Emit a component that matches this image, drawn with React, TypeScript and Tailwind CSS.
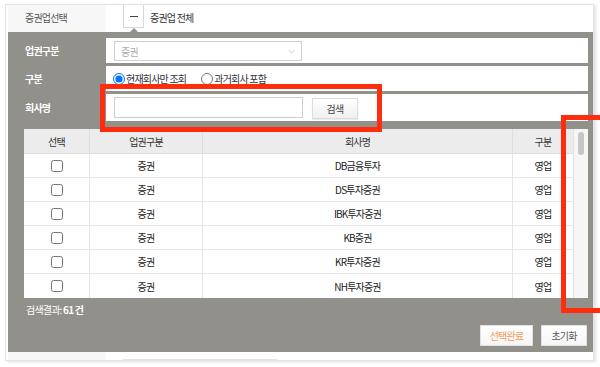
import { ChevronDown } from "lucide-react";

interface Company {
    sector: string;
    name: string;
    kind: string;
}

const companies: Company[] = [
    { sector: "증권", name: "DB금융투자", kind: "영업" },
    { sector: "증권", name: "DS투자증권", kind: "영업" },
    { sector: "증권", name: "IBK투자증권", kind: "영업" },
    { sector: "증권", name: "KB증권", kind: "영업" },
    { sector: "증권", name: "KR투자증권", kind: "영업" },
    { sector: "증권", name: "NH투자증권", kind: "영업" },
];

export default function App() {
    return (
        <div className="relative w-[600px] h-[367px] overflow-hidden bg-white font-['Noto_Sans_CJK_KR','Noto_Sans',sans-serif] text-[10px] tracking-[-0.8px] text-[#333]">
            {/* Card */}
            <div className="mt-[4px] ml-[5px] w-[589px] border border-[#e3e3e3] pl-[2px] bg-white shadow-[2px_1px_3px_rgba(0,0,0,0.12)]">
                {/* Top selector row */}
                <div className="flex h-[27px]">
                    <div className="w-[98px] bg-[#f7f7f7] pl-[17px] flex items-center text-[#555] pb-[3px]">증권업선택</div>
                    <div className="flex-1 flex items-start pl-[17px]">
                        <div className="w-[21px] h-[23px] border border-[#d6d6d6] border-t-0 flex items-center justify-center bg-white">
                            <div className="w-[8px] h-[1px] bg-[#444]" />
                        </div>
                        <span className="ml-[6px] mt-[5px] text-[#333]">증권업 전체</span>
                    </div>
                </div>

                {/* Gray panel */}
                <div className="relative bg-[#92908a] h-[320px] pt-[6px]">
                    <div className="absolute left-[122px] -top-[4px] w-0 h-0 border-l-[4px] border-r-[4px] border-b-[4px] border-l-transparent border-r-transparent border-b-[#92908a]" />

                    {/* Form rows */}
                    <div className="flex flex-col gap-[3px]">
                        <div className="flex h-[25px]">
                            <div className="w-[98px] pl-[17px] flex items-center font-bold text-white">업권구분</div>
                            <div className="flex-1 mr-[5px] bg-white pl-[8px] pt-[3px]">
                                <div className="w-[188px] h-[20px] border border-[#cfcfcf] flex items-center justify-between pl-[6px] pr-[4px] text-[#aaa]">
                                    <span>증권</span>
                                    <ChevronDown className="w-[11px] h-[11px] text-[#b5b5b5]" strokeWidth={1.5} />
                                </div>
                            </div>
                        </div>
                        <div className="flex h-[25px]">
                            <div className="w-[98px] pl-[17px] flex items-center font-bold text-white">구분</div>
                            <div className="flex-1 mr-[5px] bg-white pl-[7px] flex items-center gap-[15px]">
                                <label className="flex items-center">
                                    <input type="radio" name="kind" defaultChecked className="m-0 w-[12px] h-[12px]" />
                                    <span className="ml-[1px]">현재회사만 조회</span>
                                </label>
                                <label className="flex items-center">
                                    <input type="radio" name="kind" className="m-0 w-[12px] h-[12px]" />
                                    <span className="ml-[1px]">과거회사 포함</span>
                                </label>
                            </div>
                        </div>
                        <div className="flex h-[27px]">
                            <div className="w-[98px] pl-[17px] flex items-center font-bold text-white">회사명</div>
                            <div className="flex-1 mr-[5px] bg-white pl-[8px] pt-[3px] flex items-start">
                                <input type="text" className="w-[189px] h-[21px] border border-[#cfcfcf] outline-none" />
                                <button className="ml-[9px] mt-[1px] w-[46px] h-[21px] border border-[#dcdcdc] bg-gradient-to-b from-white to-[#f0f0f0] text-[#444] shadow-[0_1px_1px_rgba(0,0,0,0.08)]">
                                    검색
                                </button>
                            </div>
                        </div>
                    </div>

                    {/* Table */}
                    <div className="mt-[8px] ml-[16px] mr-[5px] flex bg-white">
                        <div className="w-[549px]">
                            <div className="flex h-[25px] bg-[#ececec] border-b border-[#dedede]">
                                <div className="w-[66px] flex items-center justify-center border-r border-[#dedede]">선택</div>
                                <div className="w-[113px] flex items-center justify-center border-r border-[#dedede]">업권구분</div>
                                <div className="w-[310px] flex items-center justify-center border-r border-[#dedede]">회사명</div>
                                <div className="w-[60px] flex items-center justify-center">구분</div>
                            </div>
                            {companies.map((c) => (
                                <div key={c.name} className="flex h-[24px] border-b border-[#e6e6e6] last:border-b-0">
                                    <div className="w-[66px] flex items-center justify-center border-r border-[#e6e6e6]">
                                        <input type="checkbox" className="m-0 w-[12px] h-[12px]" />
                                    </div>
                                    <div className="w-[113px] flex items-center justify-center border-r border-[#e6e6e6] text-[#222]">{c.sector}</div>
                                    <div className="w-[310px] flex items-center justify-center border-r border-[#e6e6e6] text-[#222]">{c.name}</div>
                                    <div className="w-[60px] flex items-center justify-center text-[#222]">{c.kind}</div>
                                </div>
                            ))}
                        </div>
                        {/* Scrollbar */}
                        <div className="w-[15px] bg-[#f6f6f6] border-l border-[#e3e3e3] pt-[3px] flex justify-center">
                            <div className="w-[6px] h-[23px] rounded-full bg-[#c6c6c6]" />
                        </div>
                    </div>

                    <div className="mt-[4px] ml-[18px] text-white">
                        검색결과: <span className="font-bold">61 건</span>
                    </div>

                    <div className="mt-[8px] mr-[6px] flex justify-end gap-[8px]">
                        <button className="w-[53px] h-[21px] border border-[#e0e0e0] bg-gradient-to-b from-white to-[#f6f6f6] text-[#f29a55]">선택완료</button>
                        <button className="w-[46px] h-[21px] border border-[#e0e0e0] bg-gradient-to-b from-white to-[#f6f6f6] text-[#555]">초기화</button>
                    </div>
                </div>

                {/* Bottom strip */}
                <div className="flex h-[8px]">
                    <div className="w-[98px] bg-[#f7f7f7]" />
                    <div className="flex-1 pl-[17px] flex items-end">
                        <div className="w-[154px] h-[1px] bg-[#e2e2e2]" />
                    </div>
                </div>
            </div>

            {/* Red annotation boxes */}
            <div className="absolute left-[100px] top-[84px] w-[282px] h-[48px] border-[5px] border-[#ff2d0d]" />
            <div className="absolute left-[561px] top-[115px] w-[50px] h-[198px] border-[5px] border-[#ff2d0d]" />
        </div>
    );
}
